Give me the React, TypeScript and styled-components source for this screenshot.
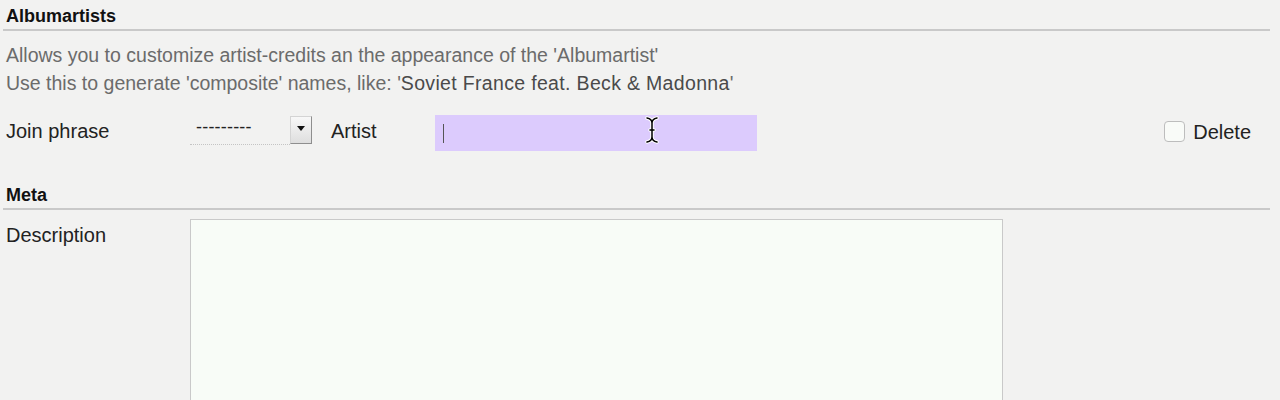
import React from "react";
import styled, { createGlobalStyle } from "styled-components";

const Global = createGlobalStyle`
  html, body { margin: 0; padding: 0; background: #f2f2f1; }
  body { font-family: "Liberation Sans", Arial, Helvetica, sans-serif; color: #222; }
`;

const Page = styled.div`
  width: 1270px;
  padding: 0 0 0 3px;
  box-sizing: border-box;
  display: flex;
  flex-direction: column;
`;

const SectionTitle = styled.h3<{ $top: number }>`
  margin: ${(p) => p.$top}px 0 0;
  padding: 0 0 2px 3px;
  font-size: 18px;
  font-weight: bold;
  line-height: 22px;
  color: #111;
  border-bottom: 2px solid #c9c9c9;
`;

const Help = styled.p`
  margin: 10px 0 0;
  padding-left: 3px;
  font-size: 19.5px;
  line-height: 28px;
  color: #6b6b6b;
`;

const Strong = styled.span`
  color: #4a4a4a;
  letter-spacing: 0.33px;
`;

const Row = styled.div<{ $top: number; $align?: string }>`
  display: flex;
  align-items: ${(p) => p.$align || "center"};
  margin-top: ${(p) => p.$top}px;
`;

const Label = styled.label<{ $width: number; $pad?: number; $bottom?: number }>`
  flex: 0 0 ${(p) => p.$width}px;
  padding-left: 3px;
  padding-top: ${(p) => p.$pad || 0}px;
  padding-bottom: ${(p) => p.$bottom || 0}px;
  box-sizing: border-box;
  font-size: 20px;
  line-height: 22px;
  color: #222;
`;

const SelectWrap = styled.div`
  align-self: flex-start;
  margin-top: 1px;
  display: flex;
  align-items: flex-end;
  height: 29px;
`;

const SelectValue = styled.div`
  width: 100px;
  height: 29px;
  box-sizing: border-box;
  padding: 0 0 0 6px;
  border-bottom: 1px dotted #c4c4c4;
  font-size: 18px;
  line-height: 22px;
  color: #222;
  letter-spacing: 0.2px;
`;

const SelectButton = styled.div`
  width: 22px;
  height: 28px;
  box-sizing: border-box;
  margin-bottom: 1px;
  border: 1px solid #8e8e8e;
  border-top-color: #d4d4d4;
  border-left-color: #d4d4d4;
  background: linear-gradient(#f8f8f8, #dedede);
  display: flex;
  align-items: center;
  justify-content: center;
  &::after {
    content: "";
    display: block;
    border-left: 4px solid transparent;
    border-right: 4px solid transparent;
    border-top: 5px solid #111;
    margin-top: -4px;
  }
`;

const FieldLabel = styled.span`
  margin-left: 19px;
  padding-bottom: 4px;
  width: 104px;
  font-size: 20px;
  line-height: 22px;
  color: #222;
`;

const InputBox = styled.div`
  position: relative;
  width: 322px;
  height: 36px;
  background: #dccbfd;
`;

const Caret = styled.span`
  position: absolute;
  left: 8px;
  top: 9px;
  width: 1px;
  height: 19px;
  background: #555;
`;

const Pointer = styled.svg`
  position: absolute;
  left: 209px;
  top: 1px;
`;

const DeleteGroup = styled.label`
  margin-left: auto;
  margin-right: 19px;
  padding-bottom: 3px;
  display: flex;
  align-items: center;
  gap: 8px;
  font-size: 20px;
  line-height: 22px;
  color: #222;
`;

const Check = styled.span`
  width: 21px;
  height: 21px;
  box-sizing: border-box;
  border: 1px solid #bdbdbd;
  border-radius: 4px;
  background: #f9fbf8;
`;

const TextArea = styled.div`
  width: 813px;
  height: 200px;
  box-sizing: border-box;
  border: 1px solid #c9c9c9;
  background: #f8fcf7;
`;

export default function App() {
  return (
    <>
      <Global />
      <Page>
        <SectionTitle $top={5}>Albumartists</SectionTitle>
        <Help>
          Allows you to customize artist-credits an the appearance of the 'Albumartist'
          <br />
          Use this to generate 'composite' names, like: '<Strong>Soviet France feat. Beck &amp; Madonna</Strong>'
        </Help>
        <Row $top={18}>
          <Label $width={187} $bottom={4}>Join phrase</Label>
          <SelectWrap>
            <SelectValue>---------</SelectValue>
            <SelectButton />
          </SelectWrap>
          <FieldLabel>Artist</FieldLabel>
          <InputBox>
            <Caret />
            <Pointer width="16" height="28" viewBox="0 0 16 28">
              <g fill="none" strokeLinecap="round" strokeLinejoin="round">
                <path d="M3 2 Q8 3 8 7 L8 21 Q8 25 13 26 M13 2 Q8 3 8 7 M8 21 Q8 25 3 26 M6 14 L10 14" stroke="#fff" strokeWidth="3.5" />
                <path d="M3 2 Q8 3 8 7 L8 21 Q8 25 13 26 M13 2 Q8 3 8 7 M8 21 Q8 25 3 26 M6 14 L10 14" stroke="#000" strokeWidth="1.5" />
              </g>
            </Pointer>
          </InputBox>
          <DeleteGroup>
            <Check />
            Delete
          </DeleteGroup>
        </Row>
        <SectionTitle $top={33}>Meta</SectionTitle>
        <Row $top={9} $align="flex-start">
          <Label $width={187} $pad={5}>Description</Label>
          <TextArea />
        </Row>
      </Page>
    </>
  );
}
